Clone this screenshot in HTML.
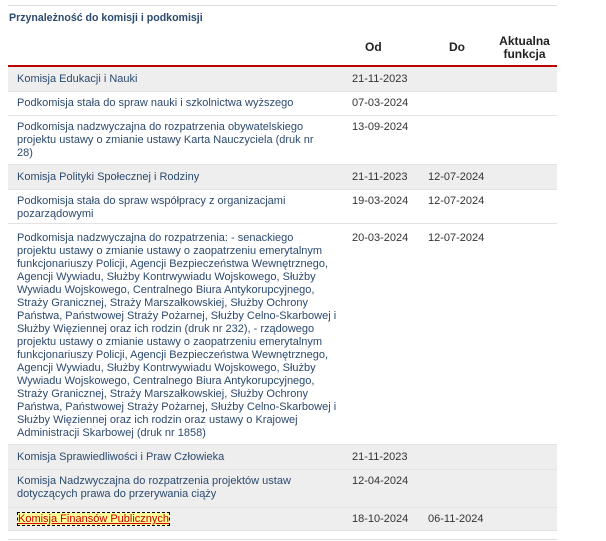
<!DOCTYPE html>
<html><head><meta charset="utf-8"><style>
body{margin:0;background:#fff;width:606px;height:541px;overflow:hidden;font-family:"Liberation Sans",Tahoma,sans-serif;font-size:11px;color:#2b4a6e}
.wrap{position:absolute;left:8px;top:5px;width:549px;border-top:1px solid #ddd}
h3{margin:0;font-size:10.6px;font-weight:bold;color:#2b4a6e;position:absolute;left:1px;top:6px;white-space:nowrap}
table{position:absolute;left:8px;top:30px;width:549px;border-collapse:collapse}
th{font-weight:bold;font-size:12px;color:#222;line-height:13px;vertical-align:middle;text-align:center;height:35px;border-bottom:2px solid #b00;padding:0}
td{vertical-align:top;line-height:13px;padding:5px 0 5px 9px;border-bottom:1px solid #e2e2e2;white-space:nowrap;color:#2b4a6e}
td.d{padding-left:0;color:#333}
tr.g td{background:#eee}
.f{color:#c00;background:#ffff99;outline:1px dashed #000;text-decoration:underline}
.bottom{position:absolute;left:8px;top:539px;width:549px;border-top:1px solid #ddd}
</style></head><body>
<div class="wrap"><h3>Przynależność do komisji i podkomisji</h3></div>
<table>
<colgroup><col style="width:344px"><col style="width:76px"><col style="width:68px"><col></colgroup>
<tr><th></th><th style="text-align:left;padding-left:13px">Od</th><th style="text-align:left;padding-left:21px">Do</th><th style="padding-right:4px">Aktualna<br>funkcja</th></tr>
<tr class="g"><td style="height:13px;padding-top:6px">Komisja Edukacji i Nauki</td><td class="d" style="padding-top:6px">21-11-2023</td><td></td><td></td></tr>
<tr><td>Podkomisja stała do spraw nauki i szkolnictwa wyższego</td><td class="d">07-03-2024</td><td></td><td></td></tr>
<tr><td style="padding-bottom:4px">Podkomisja nadzwyczajna do rozpatrzenia obywatelskiego<br>projektu ustawy o zmianie ustawy Karta Nauczyciela (druk nr<br>28)</td><td class="d">13-09-2024</td><td></td><td></td></tr>
<tr class="g"><td style="padding-top:6px">Komisja Polityki Społecznej i Rodziny</td><td class="d" style="padding-top:6px">21-11-2023</td><td class="d" style="padding-top:6px">12-07-2024</td><td></td></tr>
<tr><td style="padding-bottom:2px">Podkomisja stała do spraw współpracy z organizacjami<br>pozarządowymi</td><td class="d">19-03-2024</td><td class="d">12-07-2024</td><td></td></tr>
<tr><td style="padding-top:8px;padding-bottom:4px">Podkomisja nadzwyczajna do rozpatrzenia: - senackiego<br>projektu ustawy o zmianie ustawy o zaopatrzeniu emerytalnym<br>funkcjonariuszy Policji, Agencji Bezpieczeństwa Wewnętrznego,<br>Agencji Wywiadu, Służby Kontrwywiadu Wojskowego, Służby<br>Wywiadu Wojskowego, Centralnego Biura Antykorupcyjnego,<br>Straży Granicznej, Straży Marszałkowskiej, Służby Ochrony<br>Państwa, Państwowej Straży Pożarnej, Służby Celno-Skarbowej i<br>Służby Więziennej oraz ich rodzin (druk nr 232), - rządowego<br>projektu ustawy o zmianie ustawy o zaopatrzeniu emerytalnym<br>funkcjonariuszy Policji, Agencji Bezpieczeństwa Wewnętrznego,<br>Agencji Wywiadu, Służby Kontrwywiadu Wojskowego, Służby<br>Wywiadu Wojskowego, Centralnego Biura Antykorupcyjnego,<br>Straży Granicznej, Straży Marszałkowskiej, Służby Ochrony<br>Państwa, Państwowej Straży Pożarnej, Służby Celno-Skarbowej i<br>Służby Więziennej oraz ich rodzin oraz ustawy o Krajowej<br>Administracji Skarbowej (druk nr 1858)</td><td class="d" style="padding-top:8px">20-03-2024</td><td class="d" style="padding-top:8px">12-07-2024</td><td></td></tr>
<tr class="g"><td style="padding-top:6px">Komisja Sprawiedliwości i Praw Człowieka</td><td class="d" style="padding-top:6px">21-11-2023</td><td></td><td></td></tr>
<tr class="g"><td style="padding-bottom:6px">Komisja Nadzwyczajna do rozpatrzenia projektów ustaw<br>dotyczących prawa do przerywania ciąży</td><td class="d">12-04-2024</td><td></td><td></td></tr>
<tr class="g"><td style="padding-top:5px;padding-bottom:4px;padding-left:10px"><span class="f">Komisja Finansów Publicznych</span></td><td class="d" style="padding-top:5px;padding-bottom:4px">18-10-2024</td><td class="d" style="padding-top:5px;padding-bottom:4px">06-11-2024</td><td></td></tr>
</table>
<div class="bottom"></div>
</body></html>
